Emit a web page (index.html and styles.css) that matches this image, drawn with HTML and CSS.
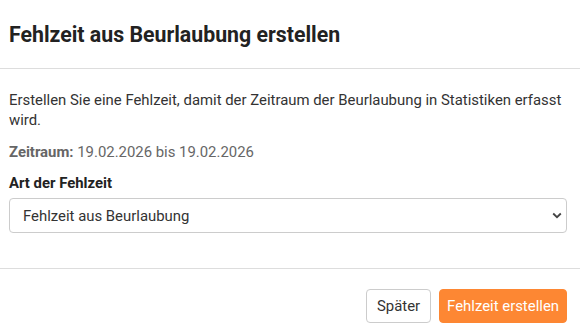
FILE: index.html
```html
<!DOCTYPE html>
<html lang="de">
<head>
<meta charset="utf-8">
<link rel="stylesheet" href="styles.css">
</head>
<body>
<div class="modal">
  <div class="modal-header">
    <h2 class="title">Fehlzeit aus Beurlaubung erstellen</h2>
  </div>
  <div class="modal-body">
    <p class="intro">Erstellen Sie eine Fehlzeit, damit der Zeitraum der Beurlaubung in Statistiken erfasst wird.</p>
    <p class="range"><strong>Zeitraum:</strong> 19.02.2026 bis 19.02.2026</p>
    <label class="label">Art der Fehlzeit</label>
    <div class="select">
      <span>Fehlzeit aus Beurlaubung</span>
      <svg class="chev" width="10" height="7" viewBox="0 0 10 7"><path d="M1.2 1.5 L5 5.2 L8.8 1.5" fill="none" stroke="#444" stroke-width="1.8"/></svg>
    </div>
  </div>
  <div class="modal-footer">
    <button class="btn btn-light">Später</button>
    <button class="btn btn-primary">Fehlzeit erstellen</button>
  </div>
</div>
</body>
</html>
```
FILE: styles.css
```css
html, body { margin: 0; padding: 0; background: #fff; }
body { font-family: Roboto, "Liberation Sans", sans-serif; color: #333; width: 580px; }
.modal { width: 580px; }
.modal-header { border-bottom: 1px solid #ddd; display: flex; align-items: center; padding: 0 9px; box-sizing: border-box; height: 69px; }
.title { margin: 0; font-size: 21.3px; font-weight: 700; color: #222; }
.modal-body { padding: 21px 13px 35px 9px; }
.intro { margin: 0; font-size: 14.9px; line-height: 20px; }
.range { margin: 12px 0 0; font-size: 14.9px; line-height: 20px; color: #666; }
.range strong { font-weight: 700; }
.label { display: block; margin-top: 11px; font-size: 14.9px; line-height: 20px; font-weight: 700; color: #222; }
.select { margin-top: 5px; height: 35px; box-sizing: border-box; border: 1px solid #ccc; border-radius: 4px; display: flex; align-items: center; justify-content: space-between; padding: 0 4px 0 13px; font-size: 14.9px; color: #333; }
.modal-footer { border-top: 1px solid #ddd; display: flex; justify-content: flex-end; gap: 8px; padding: 20px 13px 11px; }
.btn { font-family: Roboto, "Liberation Sans", sans-serif; font-size: 14.9px; height: 34px; border-radius: 4px; cursor: pointer; }
.btn-light { background: #fff; border: 1px solid #ccc; color: #333; padding: 0 10px; }
.btn-primary { background: #fd8733; border: 1px solid #fd8733; color: #fff; padding: 0 7px; }
```
